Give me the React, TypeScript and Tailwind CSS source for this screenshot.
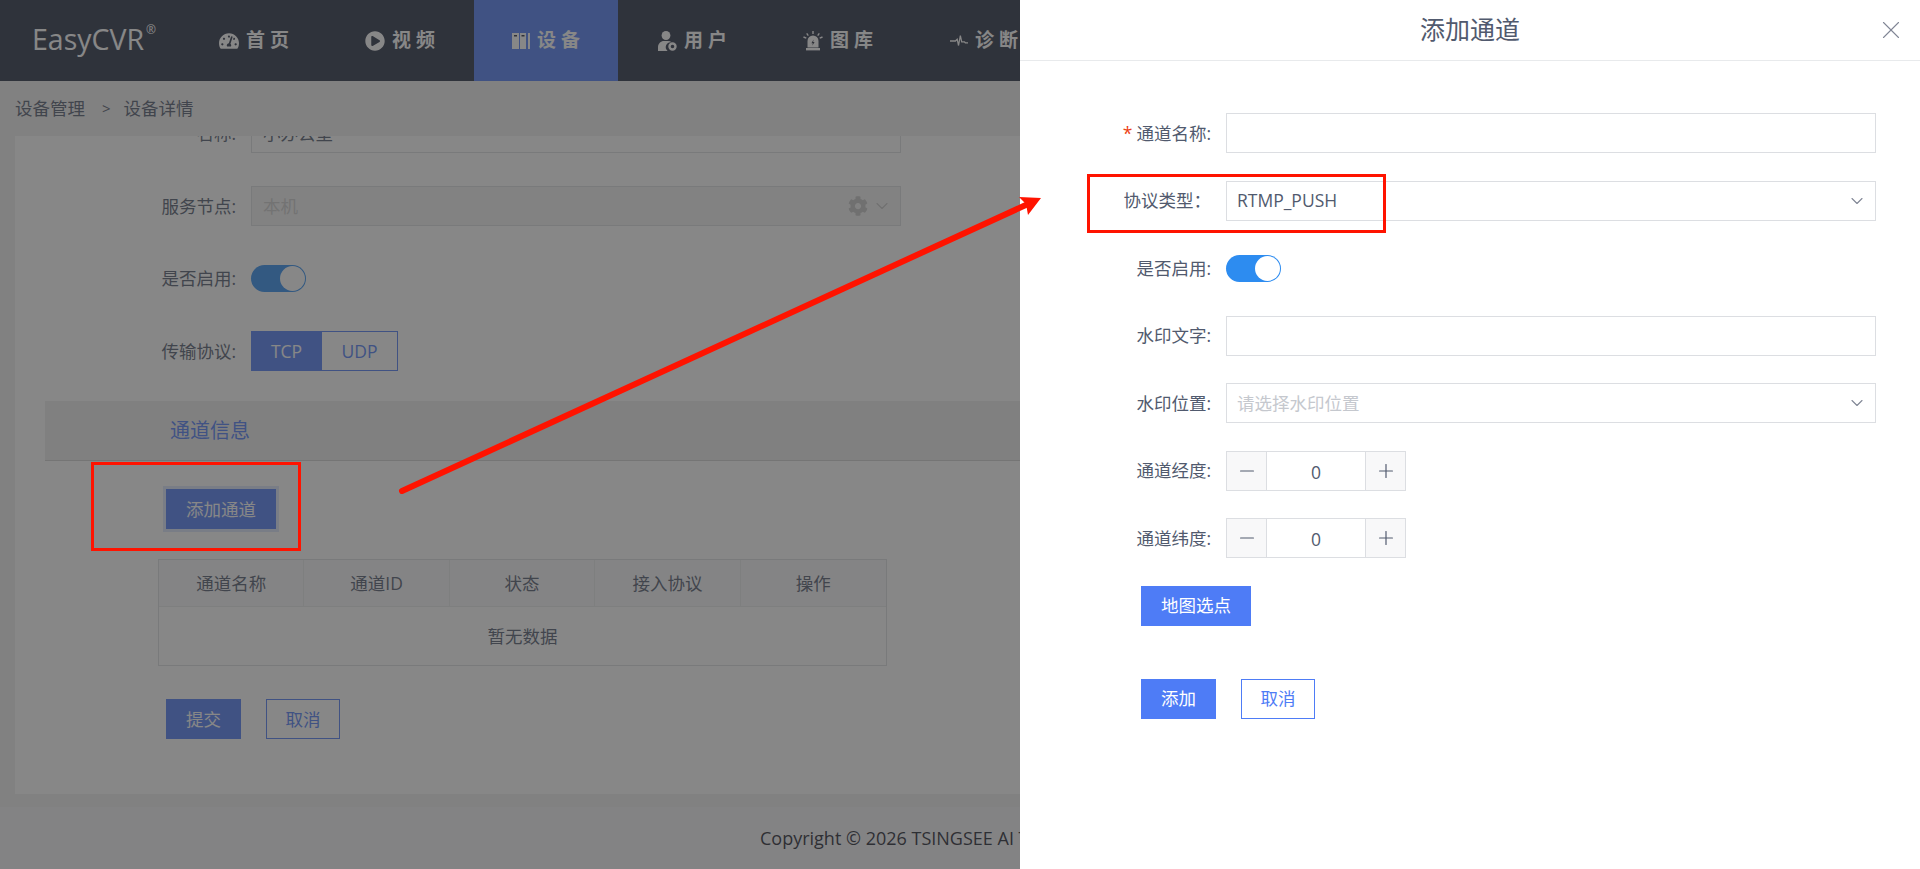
import { ChevronDown, Minus, Plus, X } from "lucide-react";
import { FaCog, FaPlayCircle, FaTachometerAlt } from "react-icons/fa";

const font = { fontFamily: '"Open Sans", "Noto Sans CJK SC", sans-serif' };

function DeviceIcon() {
  return (
    <svg viewBox="0 0 18 18" className="h-[18px] w-[18px]" fill="currentColor">
      <rect x="0" y="1" width="7" height="16" />
      <rect x="8" y="1" width="6" height="16" />
      <rect x="16" y="1" width="2" height="16" />
      <rect x="2" y="3" width="3" height="1.5" fill="#25293a" />
      <rect x="9.5" y="3" width="3" height="1.5" fill="#25293a" />
    </svg>
  );
}

function UserIcon() {
  return (
    <svg viewBox="0 0 20 20" className="h-5 w-5" fill="currentColor">
      <ellipse cx="9" cy="4.5" rx="4.4" ry="4.5" />
      <path d="M1 20v-3.5C1 12.5 3.8 10 7 10h4c1.4 0 2.6.4 3.5 1.2A5 5 0 0 0 10.6 20z" />
      <circle cx="15.5" cy="15.5" r="3" fill="none" stroke="currentColor" strokeWidth="2.4" />
    </svg>
  );
}

function SirenIcon() {
  return (
    <svg viewBox="0 0 20 20" className="h-5 w-5" fill="currentColor">
      <path d="M4.5 16.5V10a5.5 5.5 0 0 1 11 0v6.5z" />
      <rect x="3" y="17" width="14" height="2.4" />
      <path d="M10.6 8.5 8.4 12.2h1.5l-.6 2.6 2.3-3.8h-1.5z" fill="#25293a" />
      <path d="M10 0v3M3.7 2.4l1.6 2.2M16.3 2.4l-1.6 2.2M.5 6l2.8 1.2M19.5 6l-2.8 1.2" stroke="currentColor" strokeWidth="1.4" fill="none" />
    </svg>
  );
}

function PulseIcon() {
  return (
    <svg viewBox="0 0 20 20" className="h-[18px] w-[18px]" fill="none" stroke="currentColor" strokeWidth="1.4">
      <path d="M0 10h6l2-2 1.5 7 2-11 1.5 7h3l1 1h3" />
    </svg>
  );
}

const navItems = [
  { label: "首页", icon: <FaTachometerAlt size={20} /> },
  { label: "视频", icon: <FaPlayCircle size={20} /> },
  { label: "设备", icon: <DeviceIcon />, active: true },
  { label: "用户", icon: <UserIcon /> },
  { label: "图库", icon: <SirenIcon /> },
  { label: "诊断", icon: <PulseIcon /> },
];

function Toggle() {
  return (
    <div className="flex h-[27px] w-[55px] items-center justify-end rounded-full bg-[#2d8cf0] pr-px">
      <div className="h-[25px] w-[25px] rounded-full bg-white" />
    </div>
  );
}

function Stepper({ label }: { label: string }) {
  return (
    <DrawerRow label={label}>
      <div className="flex h-10 w-[180px] border border-[#dcdee2] text-[#515a6e]">
        <div className="flex w-10 items-center justify-center border-r border-[#dcdee2] bg-[#f8f8f9]">
          <Minus size={22} strokeWidth={1.3} />
        </div>
        <div className="flex-1 pt-px text-center text-[17.5px] leading-[38px]">0</div>
        <div className="flex w-10 items-center justify-center border-l border-[#dcdee2] bg-[#f8f8f9]">
          <Plus size={22} strokeWidth={1.3} />
        </div>
      </div>
    </DrawerRow>
  );
}

function DrawerRow({ label, children }: { label: React.ReactNode; children: React.ReactNode }) {
  return (
    <div className="flex h-10 items-center">
      <div className="w-[85px] pr-[15px] text-right text-[17.5px] whitespace-nowrap text-[#515a6e]">
        <div className="-ml-[40px] flex justify-end">{label}</div>
      </div>
      <div className="flex-1">{children}</div>
    </div>
  );
}

function LeftRow({ label, children }: { label: React.ReactNode; children: React.ReactNode }) {
  return (
    <div className="flex h-10 items-center">
      <div className="w-[236px] pr-[15px] text-right text-[17.5px] whitespace-nowrap text-[#515a6e]">{label}</div>
      <div className="flex-1">{children}</div>
    </div>
  );
}

export default function App() {
  return (
    <div className="relative h-screen w-full overflow-hidden bg-[#f0f0f0]" style={font}>
      <header className="flex h-[81px] bg-[#252d43] text-white">
        <div className="flex w-[182px] items-center pb-[2px] pl-[32px] text-[28.5px]">
          EasyCVR<sup className="-mt-2 ml-0.5 text-[12px]">®</sup>
        </div>
        <nav className="flex gap-[2px]">
          {navItems.map((item) => (
            <div
              key={item.label}
              className={`flex w-[144px] items-center justify-center gap-[7px] pl-[5px] text-[19px] font-bold tracking-[5px] ${item.active ? "bg-[#4e7cf6]" : ""}`}
            >
              {item.icon}
              <span>{item.label}</span>
            </div>
          ))}
        </nav>
      </header>

      <div className="flex h-[55px] items-center pl-[15px] text-[17.5px] text-[#515a6e]">
        <span>设备管理</span>
        <span className="mr-[13px] ml-[17px] text-[15px]">&gt;</span>
        <span>设备详情</span>
      </div>

      <main className="ml-[15px] h-[658px] overflow-hidden bg-white">
        <div className="-mt-[23px] flex flex-col gap-[32.75px]">
          <LeftRow label={<><span className="mr-1 text-[#ed4014]">*</span>名称:</>}>
            <div className="h-10 w-[650px] border border-[#dcdee2] px-[11px] text-[17.5px] leading-[38px] text-[#515a6e]">小办公室</div>
          </LeftRow>
          <LeftRow label="服务节点:">
            <div className="flex h-10 w-[650px] items-center border border-[#dcdee2] bg-[#f3f3f3] pr-[8px] pl-[11px] text-[17.5px] text-[#ccc]">
              <span className="flex-1">本机</span>
              <FaCog size={20} className="text-[#c5c5c5]" />
              <ChevronDown size={20} strokeWidth={1.3} className="ml-1 text-[#c5c5c5]" />
            </div>
          </LeftRow>
          <LeftRow label="是否启用:">
            <Toggle />
          </LeftRow>
          <LeftRow label="传输协议:">
            <div className="flex h-10 text-[17.5px]">
              <div className="flex w-[71px] items-center justify-center bg-[#4e7cf6] text-white">TCP</div>
              <div className="flex w-[76px] items-center justify-center border border-l-0 border-[#4e7cf6] text-[#4e7cf6]">UDP</div>
            </div>
          </LeftRow>
        </div>

        <div className="mt-[30px] ml-[30px] flex h-[60px] items-center border-b border-[#d2d2d2] bg-[#eeeeee] pl-[125px] text-[20px] text-[#4e7cf6]">
          通道信息
        </div>

        <button className="mt-[28px] ml-[151px] block h-10 w-[110px] bg-[#4e7cf6] text-[17.5px] text-white shadow-[0_0_0_3px_rgba(78,124,246,0.2)]">
          添加通道
        </button>

        <div className="mt-[30px] ml-[143px] w-[729px] border border-[#dcdee2] text-[17.5px] text-[#515a6e]">
          <div className="grid h-[47px] grid-cols-5 border-b border-[#e8eaec] bg-[#f8f8f9]">
            {["通道名称", "通道ID", "状态", "接入协议", "操作"].map((head, i) => (
              <div key={head} className={`flex items-center justify-center ${i < 4 ? "border-r border-[#e8eaec]" : ""}`}>
                {head}
              </div>
            ))}
          </div>
          <div className="flex h-[58px] items-center justify-center">暂无数据</div>
        </div>

        <div className="mt-[33px] ml-[151px] flex gap-[25px] text-[17.5px]">
          <button className="h-10 w-[75px] bg-[#4e7cf6] text-white">提交</button>
          <button className="h-10 w-[74px] border border-[#4e7cf6] text-[#4e7cf6]">取消</button>
        </div>
      </main>

      <div className="h-[13px]" />

      <footer className="flex h-[62px] items-center bg-[#f5f6f8] pl-[760px] text-[18px] whitespace-nowrap text-[#1f2430]">
        Copyright © 2026 TSINGSEE AI Technology Co., Ltd.
      </footer>

      {/* mask */}
      <div className="absolute inset-0 bg-[rgba(55,55,55,0.6)]" />

      {/* drawer */}
      <aside className="absolute top-0 right-0 bottom-0 w-[900px] bg-white">
        <div className="relative flex h-[61px] items-center justify-center border-b border-[#e8eaec] text-[25px] text-[#515a6e]">
          添加通道
          <X size={30} strokeWidth={0.9} className="absolute top-[15px] right-[14px] text-[#808695]" />
        </div>
        <div className="flex flex-col gap-[27.5px] pt-[52px] pr-[44px] pl-[121px]">
          <DrawerRow label={<><span className="mr-1 text-[#ed4014]">*</span>通道名称:</>}>
            <div className="h-10 border border-[#dcdee2]" />
          </DrawerRow>
          <DrawerRow label="协议类型：">
            <div className="flex h-10 items-center justify-between border border-[#dcdee2] pr-[8px] pl-[10px] text-[17.5px] text-[#515a6e]">
              RTMP_PUSH
              <ChevronDown size={20} strokeWidth={1.3} className="text-[#808695]" />
            </div>
          </DrawerRow>
          <DrawerRow label="是否启用:">
            <Toggle />
          </DrawerRow>
          <DrawerRow label="水印文字:">
            <div className="h-10 border border-[#dcdee2]" />
          </DrawerRow>
          <DrawerRow label="水印位置:">
            <div className="flex h-10 items-center justify-between border border-[#dcdee2] pr-[8px] pl-[10px] text-[17.5px] text-[#c5c8ce]">
              请选择水印位置
              <ChevronDown size={20} strokeWidth={1.3} className="text-[#808695]" />
            </div>
          </DrawerRow>
          <Stepper label="通道经度:" />
          <Stepper label="通道纬度:" />
          <button className="h-10 w-[110px] bg-[#4e7cf6] text-[17.5px] text-white">地图选点</button>
        </div>
        <div className="mt-[53px] ml-[121px] flex gap-[25px] text-[17.5px]">
          <button className="h-10 w-[75px] bg-[#4e7cf6] text-white">添加</button>
          <button className="h-10 w-[74px] border border-[#4e7cf6] text-[#4e7cf6]">取消</button>
        </div>
      </aside>

      {/* annotations drawn on top of the screenshot */}
      <div className="absolute top-[462px] left-[91px] h-[89px] w-[210px] border-[3px] border-[#ff1300]" />
      <div className="absolute top-[174px] left-[1087px] h-[59px] w-[299px] border-[3px] border-[#ff1300]" />
      <svg className="absolute top-0 left-0 h-full w-full" viewBox="0 0 1920 869">
        <line x1="402" y1="491" x2="1028" y2="204" stroke="#ff1300" strokeWidth="6" strokeLinecap="round" />
        <path d="M1041 198 1019 197 1026 204 1028 215z" fill="#ff1300" />
      </svg>
    </div>
  );
}
